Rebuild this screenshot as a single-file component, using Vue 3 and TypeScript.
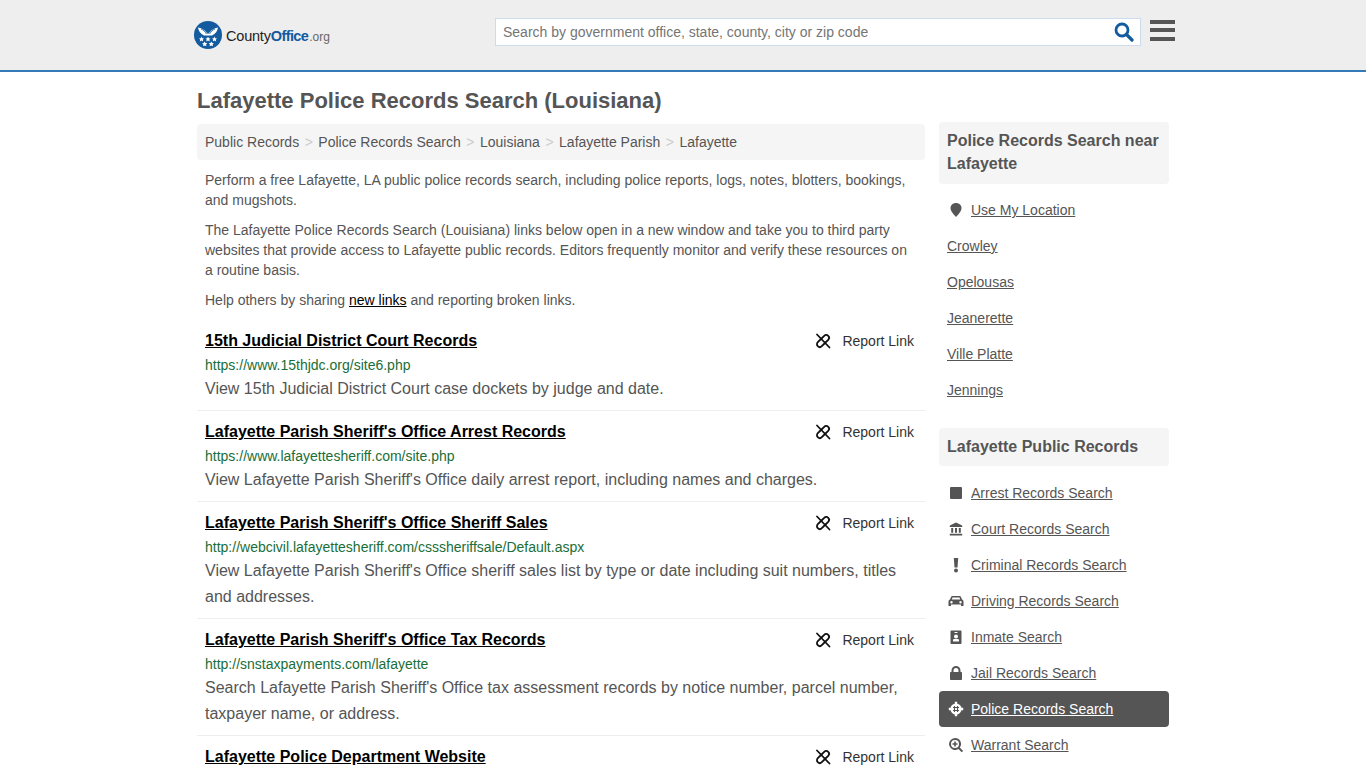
<script setup lang="ts">
interface Rec { title: string; url: string; desc: string }
const crumbs = ['Public Records', 'Police Records Search', 'Louisiana', 'Lafayette Parish', 'Lafayette']
const recs: Rec[] = [
  { title: '15th Judicial District Court Records', url: 'https://www.15thjdc.org/site6.php', desc: 'View 15th Judicial District Court case dockets by judge and date.' },
  { title: "Lafayette Parish Sheriff's Office Arrest Records", url: 'https://www.lafayettesheriff.com/site.php', desc: "View Lafayette Parish Sheriff's Office daily arrest report, including names and charges." },
  { title: "Lafayette Parish Sheriff's Office Sheriff Sales", url: 'http://webcivil.lafayettesheriff.com/csssheriffsale/Default.aspx', desc: "View Lafayette Parish Sheriff's Office sheriff sales list by type or date including suit numbers, titles and addresses." },
  { title: "Lafayette Parish Sheriff's Office Tax Records", url: 'http://snstaxpayments.com/lafayette', desc: "Search Lafayette Parish Sheriff's Office tax assessment records by notice number, parcel number, taxpayer name, or address." },
  { title: 'Lafayette Police Department Website', url: 'https://www.lafayettela.gov/police', desc: 'Visit the Lafayette Police Department website.' },
]
const near = ['Crowley', 'Opelousas', 'Jeanerette', 'Ville Platte', 'Jennings']
const pub = [
  { t: 'Arrest Records Search', i: 'square' },
  { t: 'Court Records Search', i: 'bank' },
  { t: 'Criminal Records Search', i: 'bang' },
  { t: 'Driving Records Search', i: 'car' },
  { t: 'Inmate Search', i: 'id' },
  { t: 'Jail Records Search', i: 'lock' },
  { t: 'Police Records Search', i: 'cross', active: true },
  { t: 'Warrant Search', i: 'zoom' },
]
</script>

<template>
  <div class="page">
    <header class="top">
      <div class="top-in">
        <a class="logo">
          <svg class="seal" viewBox="0 0 28 28" width="28" height="28">
            <circle cx="14" cy="14" r="14" fill="#135a9e" />
            <path d="M4 6.500c3 .5 6 2 8 4.500l2 2 2-2c2-2.500 5-4 8-4.500-.5 3.500-2.500 6.500-6 8h-8C6.500 13 4.500 10 4 6.500z" fill="#fff" />
            <path d="M7 8c2.500 1 4 2.500 5.500 5M21 8c-2.500 1-4 2.500-5.500 5" stroke="#135a9e" stroke-width=".8" fill="none" />
            <g fill="#fff">
              <path d="M7.500 15.500l.8 1.700 1.800.2-1.300 1.200.4 1.800-1.700-.9-1.700.9.400-1.800-1.300-1.200 1.800-.2z" />
              <path d="M14 15.500l.8 1.700 1.800.2-1.300 1.200.4 1.800-1.700-.9-1.700.9.400-1.800-1.300-1.200 1.800-.2z" />
              <path d="M20.500 15.500l.8 1.700 1.800.2-1.300 1.200.4 1.800-1.700-.9-1.700.9.400-1.800-1.300-1.200 1.800-.2z" />
              <path d="M10.700 20.500l.8 1.600 1.800.2-1.300 1.200.4 1.700-1.700-.8-1.700.8.400-1.700-1.300-1.200 1.800-.2z" />
              <path d="M17.300 20.500l.8 1.600 1.800.2-1.300 1.200.4 1.700-1.700-.8-1.700.8.400-1.700-1.300-1.200 1.800-.2z" />
            </g>
          </svg>
          <span class="lg-a">County</span><span class="lg-b">Office</span><span class="lg-c">.org</span>
        </a>
        <div class="search">
          <span class="ph">Search by government office, state, county, city or zip code</span>
          <svg class="mag" viewBox="0 0 20 20" width="20" height="20">
            <circle cx="8" cy="8" r="6" fill="none" stroke="#135a9e" stroke-width="2.800" />
            <path d="M12.500 12.500L18 18" stroke="#135a9e" stroke-width="3.200" stroke-linecap="round" />
          </svg>
        </div>
        <div class="burger"><i></i><i></i><i></i></div>
      </div>
    </header>

    <div class="wrap">
      <h1>Lafayette Police Records Search (Louisiana)</h1>
      <div class="cols">
        <main class="main">
          <nav class="crumbs">
            <template v-for="(c, i) in crumbs" :key="c">
              <span v-if="i" class="sep">&gt;</span><a>{{ c }}</a>
            </template>
          </nav>
          <div class="intro">
            <p>Perform a free Lafayette, LA public police records search, including police reports, logs, notes, blotters, bookings, and mugshots.</p>
            <p>The Lafayette Police Records Search (Louisiana) links below open in a new window and take you to third party websites that provide access to Lafayette public records. Editors frequently monitor and verify these resources on a routine basis.</p>
            <p>Help others by sharing <a class="blk">new links</a> and reporting broken links.</p>
          </div>
          <article v-for="r in recs" :key="r.title" class="rec">
            <div class="rec-head">
              <a class="rec-title">{{ r.title }}</a>
              <span class="report">
                <svg viewBox="0 0 16 16" width="16" height="16" fill="none" stroke="#111" stroke-linecap="round">
                  <path stroke-width="1.800" d="M6.500 5.500L9.200 2.800a2.800 2.800 0 0 1 4 4L10.500 9.500" />
                  <path stroke-width="1.800" d="M9.500 10.500L6.800 13.200a2.800 2.800 0 0 1-4-4L5.500 6.500" />
                  <path stroke-width="1.800" d="M2 1.500L14.500 14.500" />
                </svg>
                <span>Report Link</span>
              </span>
            </div>
            <div class="rec-url">{{ r.url }}</div>
            <div class="rec-desc">{{ r.desc }}</div>
          </article>
        </main>

        <aside class="side">
          <h2 class="side-h">Police Records Search near Lafayette</h2>
          <ul class="list near">
            <li>
              <span class="ic">
                <svg viewBox="0 0 16 16" width="16" height="16"><path fill="#555" d="M8 1c3.200 0 5.500 2.300 5.500 5 0 3.200-3.300 6.700-5.500 9-2.200-2.300-5.500-5.800-5.500-9C2.500 3.300 4.800 1 8 1z" /></svg>
              </span>
              <a>Use My Location</a>
            </li>
            <li v-for="n in near" :key="n"><a>{{ n }}</a></li>
          </ul>
          <h2 class="side-h two">Lafayette Public Records</h2>
          <ul class="list pub">
            <li v-for="p in pub" :key="p.t" :class="{ active: p.active }">
              <span class="ic">
                <svg viewBox="0 0 16 16" width="16" height="16" :fill="p.active ? '#fff' : '#555'">
                  <rect v-if="p.i === 'square'" x="2" y="2" width="12" height="12" rx="1" />
                  <path v-else-if="p.i === 'bank'" d="M8 1.500l6.200 3v1.500H1.800V4.500zM3.200 7h2v4.800h-2zM7 7h2v4.800H7zM10.800 7h2v4.800h-2zM1.800 12.800h12.400v1.700H1.800z" />
                  <path v-else-if="p.i === 'bang'" d="M5.800 1h4.400L9.500 10.500h-3zM8 11.500a2 2 0 1 1 0 4 2 2 0 0 1 0-4z" />
                  <path v-else-if="p.i === 'car'" fill-rule="evenodd" d="M4.500 3h7c.7 0 1.200.4 1.500 1l1 2.500c.8.300 1.500 1 1.500 2V13h-2.500v-1.500h-10V13H.5V8.500c0-1 .7-1.700 1.500-2L3 4c.3-.6.800-1 1.500-1zM4.500 4.600L3.800 6.500h8.400l-.7-1.900zM3.500 8a1.200 1.200 0 1 0 0 2.400 1.200 1.200 0 0 0 0-2.400zM12.500 8a1.200 1.200 0 1 0 0 2.400 1.200 1.200 0 0 0 0-2.400z" />
                  <path v-else-if="p.i === 'id'" fill-rule="evenodd" d="M3.500 1.500h9c.6 0 1 .4 1 1v11.500c0 .6-.4 1-1 1h-9c-.6 0-1-.4-1-1V2.500c0-.6.4-1 1-1zM6.500 3v1h3V3zM8 5.500a2 2 0 1 0 0 4 2 2 0 0 0 0-4zM5 10.500v2h6v-2c-1-.6-5-.6-6 0z" />
                  <path v-else-if="p.i === 'lock'" fill-rule="evenodd" d="M8 1a4.500 4.500 0 0 1 4.500 4.500V7h.5c.6 0 1 .4 1 1v6c0 .6-.4 1-1 1H3c-.6 0-1-.4-1-1V8c0-.6.4-1 1-1h.5V5.500A4.500 4.500 0 0 1 8 1zM5.500 7h5V5.500a2.500 2.500 0 0 0-5 0z" />
                  <template v-else-if="p.i === 'cross'">
                    <circle cx="8" cy="8" r="5.600" />
                    <path d="M6.800.8h2.400v3H6.800zM6.800 12.200h2.400v3H6.800zM.8 6.800h3v2.400h-3zM12.200 6.800h3v2.400h-3z" />
                    <path d="M6.500 5v6M9.500 5v6M5 6.500h6M5 9.500h6" stroke="#555" stroke-width="1.100" fill="none" />
                  </template>
                  <path v-else-if="p.i === 'zoom'" fill-rule="evenodd" d="M7 1a6 6 0 0 1 4.800 9.600l3.300 3.300-1.400 1.400-3.300-3.300A6 6 0 1 1 7 1zM7 3a4 4 0 1 0 0 8 4 4 0 0 0 0-8zM6.200 4.500h1.600v1.700h1.700v1.600H7.800v1.700H6.200V7.800H4.500V6.200h1.700z" />
                </svg>
              </span>
              <a>{{ p.t }}</a>
            </li>
          </ul>
        </aside>
      </div>
    </div>
  </div>
</template>

<style scoped>
.page { height: 768px; overflow: hidden; font-family: "Liberation Sans", Arial, sans-serif; color: #555; background: #fff; }
.top { height: 70px; background: #eee; border-bottom: 2px solid #337ab7; }
.top-in { width: 972px; margin: 0 auto; display: flex; align-items: center; height: 70px; }
.logo { display: flex; flex: none; align-items: center; width: 301px; margin-left: -3px; letter-spacing: -0.2px; font-size: 14.5px; }
.seal { margin-right: 4px; flex: none; }
.lg-a { color: #222; margin-top: 1px; }
.lg-b { color: #135a9e; font-weight: 700; letter-spacing: -0.6px; margin-top: 1px; }
.lg-c { color: #666; font-size: 12px; margin-top: 3px; margin-left: 1px; letter-spacing: 0; }
.search { width: 646px; flex: none; height: 28px; box-sizing: border-box; margin-top: -7px; background: #fff; border: 1px solid #ccdcec; display: flex; align-items: center; justify-content: space-between; padding: 0 6px 0 7px; }
.ph { font-size: 14px; color: #757575; }
.burger { margin-left: 9px; margin-top: -10px; width: 25px; flex: none; display: flex; flex-direction: column; gap: 4.500px; }
.burger i { display: block; height: 4px; background: #555; }
.wrap { width: 972px; margin: 0 auto; }
h1 { margin: 0; padding-top: 17px; height: 34px; font-size: 22px; line-height: 24px; font-weight: 700; color: #555; }
.cols { display: flex; gap: 14px; align-items: flex-start; margin-top: -1px; }
.main { width: 728px; flex: none; padding-top: 2px; }
.crumbs { height: 36px; box-sizing: border-box; background: #f5f5f5; border-radius: 4px; padding: 0 8px; display: flex; align-items: center; font-size: 14px; color: #555; }
.sep { color: #ccc; margin: 0 5.500px; }
.intro { padding: 10px 8px 0; font-size: 14px; line-height: 20px; color: #555; }
.intro p { margin: 0 0 10px; }
.blk { color: #000; text-decoration: underline; }
.rec { padding: 8px 8px 8px; border-bottom: 1px solid #eee; }
.rec-head { display: flex; justify-content: space-between; align-items: center; height: 26px; }
.rec-title { font-size: 16px; font-weight: 700; color: #000; text-decoration: underline; }
.report { display: flex; align-items: center; font-size: 14px; color: #333; padding-right: 3px; }
.report svg { margin-right: 11px; margin-left: 0; }
.rec-url { font-size: 14px; line-height: 20px; color: #1a6e37; margin: 1px 0; }
.rec-desc { font-size: 16px; line-height: 26px; color: #555; }
.side { width: 230px; flex: none; }
.side-h { margin: 0; padding: 7px 8px 9px; background: #f5f5f5; border-radius: 4px; font-size: 16px; line-height: 23px; font-weight: 700; color: #555; }
.side-h.two { margin-top: 20px; padding: 7px 8px 8px; }
.list { list-style: none; margin: 8px 0 0; padding: 0; font-size: 14px; }
.list li { height: 36px; display: flex; align-items: center; padding: 0 8px; box-sizing: border-box; border-radius: 4px; }
.list a { color: #555; text-decoration: underline; }
.ic { width: 16px; height: 16px; margin: 0 7px 0 1px; display: block; flex: none; }
.pub { margin-top: 9px; }
.active { background: #555; }
.list .active a { color: #fff; }
</style>
